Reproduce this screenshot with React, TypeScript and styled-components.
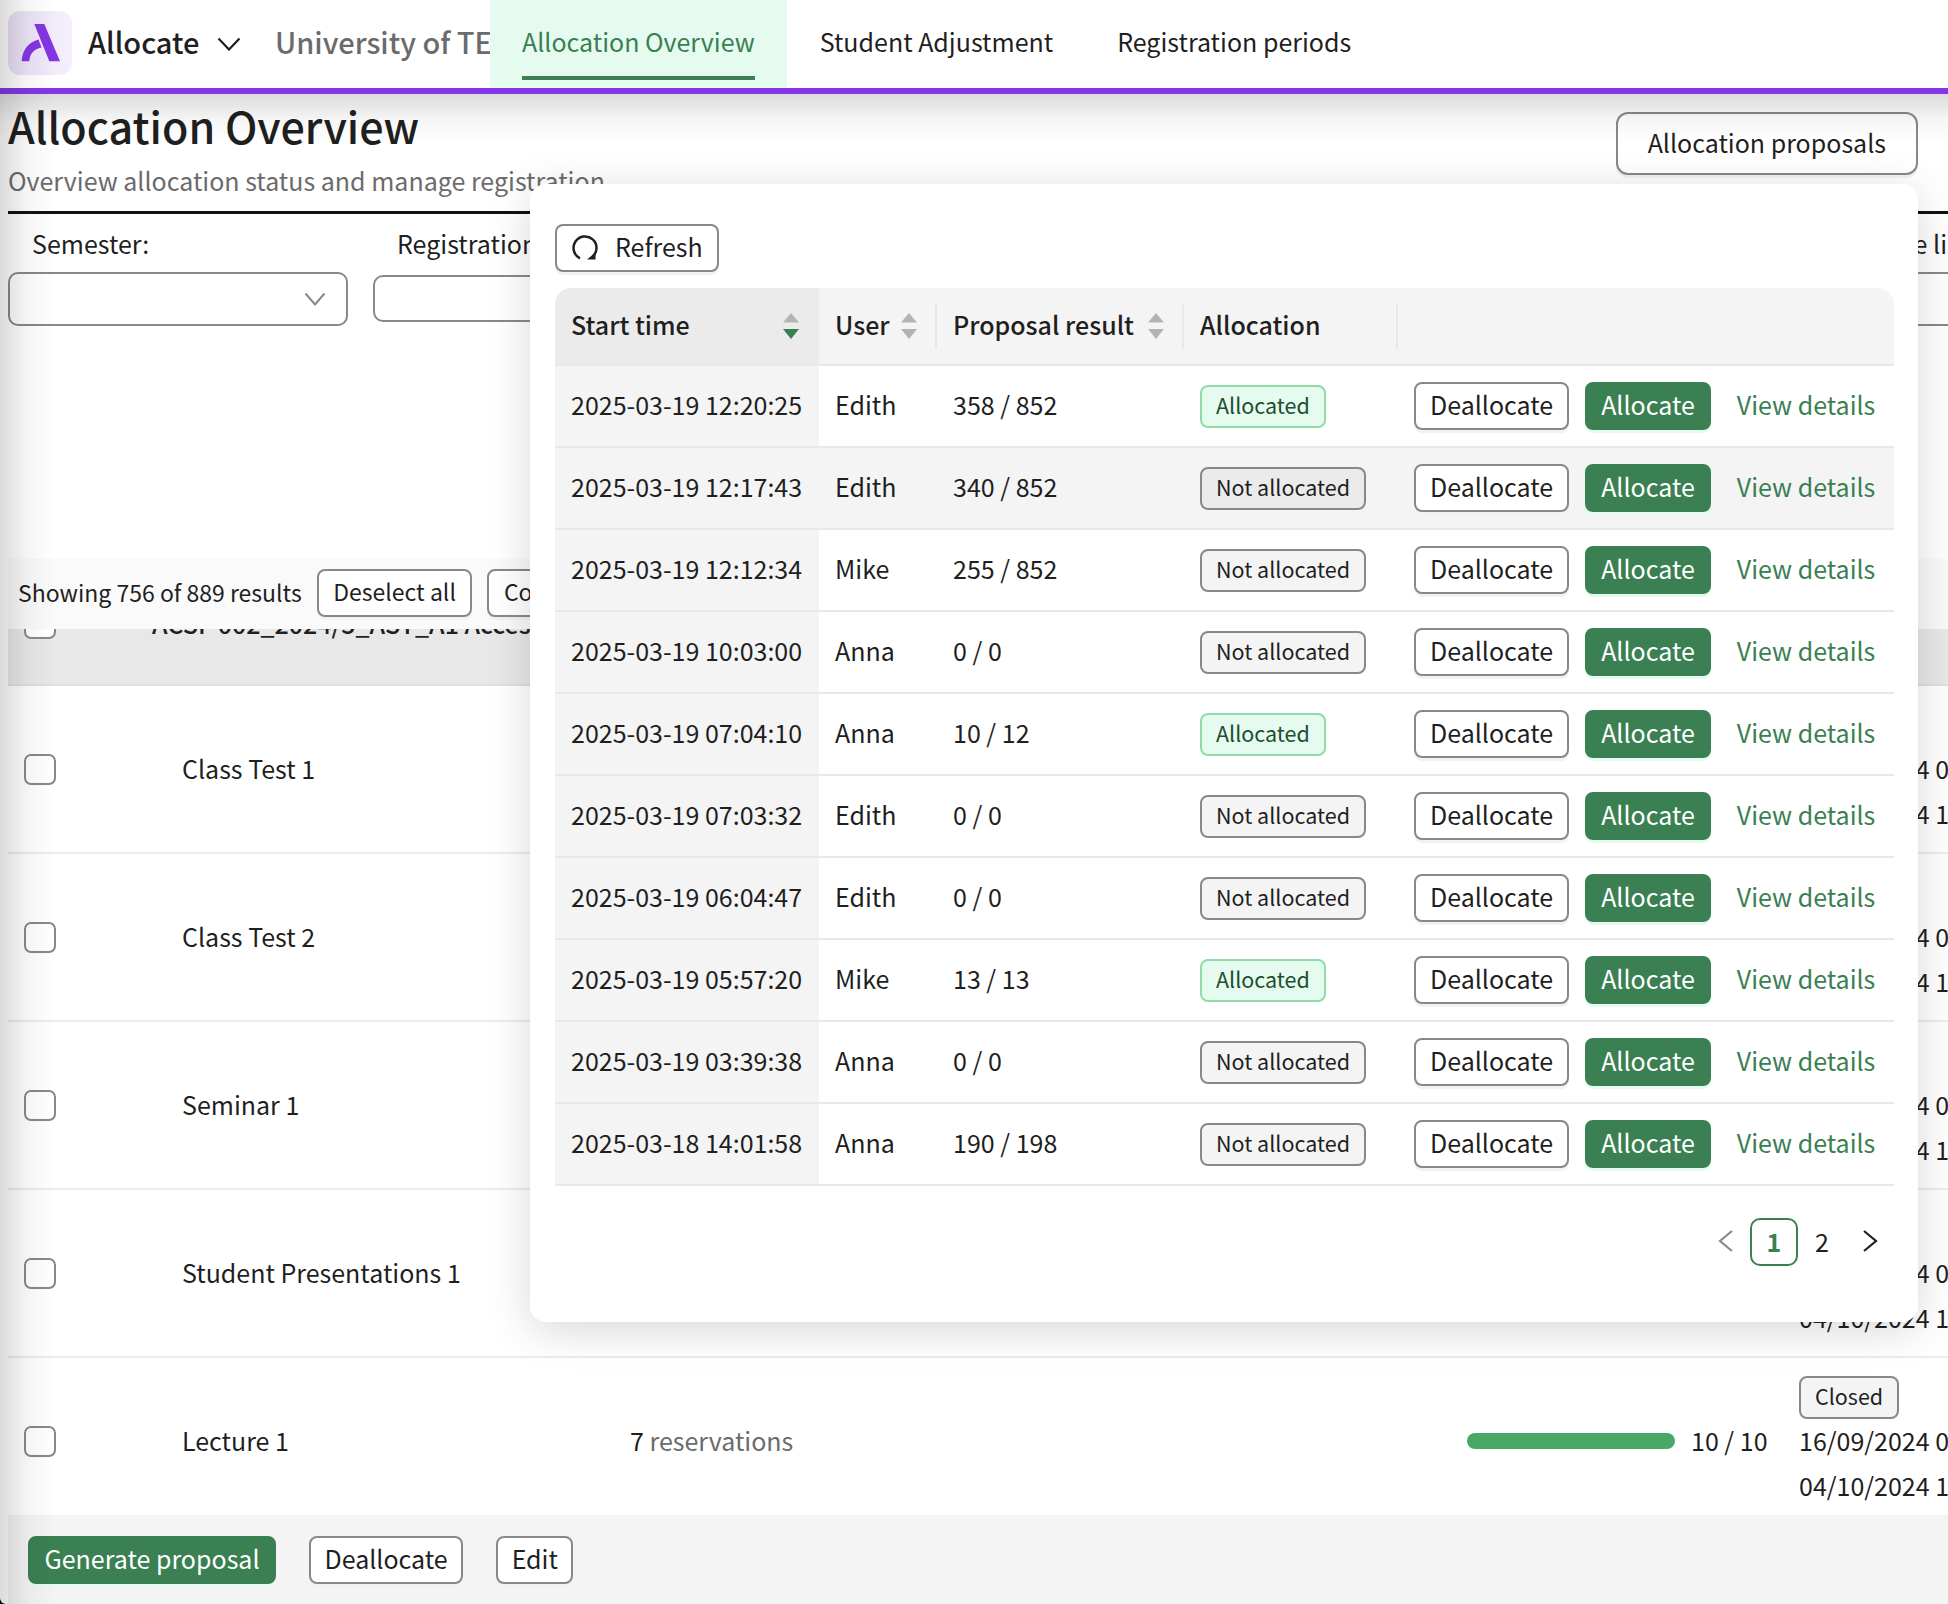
import React from "react";
import styled, { createGlobalStyle } from "styled-components";

const GREEN = "#3a8052";
const INK = "#1f1f1f";

const GlobalStyle = createGlobalStyle`
  * {
    box-sizing: border-box;
  }
  html, body {
    margin: 0;
    padding: 0;
    background: #000;
  }
  body {
    font-family: "Noto Sans CJK SC", "Noto Sans", sans-serif;
    color: ${INK};
  }
`;

const Page = styled.div`
  position: relative;
  width: 1948px;
  height: 1604px;
  overflow: hidden;
  background: #fff;
  border-bottom-left-radius: 6px;
  display: flex;
  flex-direction: column;

  &::after {
    content: "";
    position: absolute;
    inset: 0 auto 0 0;
    width: 56px;
    z-index: 1;
    pointer-events: none;
    background: linear-gradient(90deg, rgba(0, 0, 0, 0.14), rgba(0, 0, 0, 0.04) 50%, transparent);
  }
`;

const TopBar = styled.header`
  flex: none;
  height: 94px;
  display: flex;
  align-items: stretch;
  background: #fff;
  border-bottom: 6px solid #8435e5;
`;

const LogoBox = styled.div`
  flex: none;
  width: 64px;
  height: 64px;
  margin: 11px 0 0 8px;
  border-radius: 12px;
  background: linear-gradient(90deg, #e8e0f3, #f6effd);
`;

const AppName = styled.div`
  margin-left: 16px;
  width: 109px;
  padding-bottom: 6px;
  display: flex;
  align-items: center;
  font-size: 29px;
  font-weight: 500;
`;

const AppChevron = styled.svg`
  align-self: center;
  margin-left: 20px;
  width: 24px;
  height: 14px;
  flex: none;
`;

const OrgName = styled.div`
  width: 215px;
  margin-left: 34px;
  padding-bottom: 6px;
  overflow: hidden;
  white-space: nowrap;
  display: flex;
  align-items: center;
  font-size: 29px;
  font-weight: 500;
  color: #6b6b6b;
`;

const Tab = styled.a<{ $active?: boolean }>`
  display: block;
  padding: 0 32px;
  margin-right: ${(p) => (p.$active ? "1px" : "0")};
  background: ${(p) => (p.$active ? "#e6fbf0" : "transparent")};
  color: ${(p) => (p.$active ? GREEN : INK)};
  font-size: 25px;
  white-space: nowrap;
`;

const TabLabel = styled.span<{ $active?: boolean }>`
  display: block;
  height: 80px;
  line-height: 82px;
  border-bottom: 4px solid ${(p) => (p.$active ? GREEN : "transparent")};
`;

const Main = styled.main`
  position: relative;
  flex: 1;
  min-height: 0;
  display: flex;
  flex-direction: column;

  &::after {
    content: "";
    position: absolute;
    inset: 0 0 auto 0;
    height: 48px;
    z-index: 1;
    pointer-events: none;
    background: linear-gradient(180deg, rgba(0, 0, 0, 0.14), rgba(0, 0, 0, 0.035) 55%, transparent);
  }
`;

const Head = styled.div`
  flex: none;
  height: 120px;
  margin-left: 8px;
  display: flex;
  justify-content: space-between;
  align-items: flex-start;
  border-bottom: 3px solid #111;
`;

const Title = styled.h1`
  margin: 1px 0 0;
  font-size: 43px;
  line-height: 60px;
  font-weight: 500;
`;

const Subtitle = styled.p`
  margin: 2px 0 0;
  font-size: 25px;
  line-height: 46px;
  color: #6b6b6b;
  white-space: nowrap;
`;

const Button = styled.button<{ $primary?: boolean }>`
  flex: none;
  height: 48px;
  padding: 0 14.5px 3px;
  font: inherit;
  font-size: 25px;
  line-height: 1;
  white-space: nowrap;
  color: ${(p) => (p.$primary ? "#fff" : INK)};
  background: ${(p) => (p.$primary ? GREEN : "#fff")};
  border: 2px solid ${(p) => (p.$primary ? GREEN : "#888")};
  border-radius: 8px;
  box-shadow: 0 3px 0 ${(p) => (p.$primary ? "#e6fbf0" : "#f2f2f2")};
`;

const ProposalsButton = styled(Button)`
  height: 63px;
  margin: 18px 30px 0 0;
  padding: 0 30px 3px;
  border-radius: 12px;
`;

const Filters = styled.div`
  flex: none;
  height: 115px;
  margin-left: 8px;
  padding-top: 6px;
  display: flex;
  white-space: nowrap;
`;

const Filter = styled.div<{ $width: number; $offset: number }>`
  flex: none;
  width: ${(p) => p.$width}px;
  margin-left: ${(p) => p.$offset}px;
`;

const FilterLabel = styled.div`
  height: 52px;
  padding-left: 24px;
  font-size: 25px;
  line-height: 46px;
`;

const Select = styled.div<{ $tall?: boolean }>`
  height: ${(p) => (p.$tall ? 54 : 47)}px;
  margin-top: ${(p) => (p.$tall ? 0 : 3)}px;
  padding-right: 20px;
  display: flex;
  align-items: center;
  justify-content: flex-end;
  border: 2px solid #888;
  border-radius: 10px;
`;

const SelectChevron = styled.svg`
  width: 22px;
  height: 14px;
`;

const Selection = styled.div`
  flex: none;
  margin: 230px 0 0 8px;
  height: 70px;
  padding: 0 0 2px 10px;
  display: flex;
  align-items: center;
  gap: 15px;
  background: #fafafa;
  font-size: 23px;
  white-space: nowrap;
  position: relative;
  z-index: 0;

  ${Button} {
    font-size: 23px;
  }
`;

const RaisedText = styled.span`
  display: block;
  padding-bottom: 3px;
`;

const Rows = styled.div`
  flex: 1;
  min-height: 0;
  margin-left: 8px;
  overflow: hidden;
`;

const GroupRow = styled.div`
  height: 57px;
  overflow: hidden;
  background: #e8e8e8;
  border-bottom: 2px solid #e0e0e0;
`;

const GroupInner = styled.div`
  margin-top: -21px;
  padding-left: 16px;
  display: flex;
  align-items: center;
  gap: 96px;
  font-size: 25px;
  line-height: 31px;
  font-weight: 500;
  white-space: nowrap;
`;

const CheckBox = styled.span`
  display: block;
  flex: none;
  width: 32px;
  height: 31px;
  background: #fff;
  border: 2px solid #888;
  border-radius: 7px;
`;

const Row = styled.div`
  height: 168px;
  padding-left: 16px;
  display: grid;
  grid-template-columns: 158px 448px 837px 332px 1fr;
  align-items: center;
  border-bottom: 2px solid #ececec;
  font-size: 25px;
  white-space: nowrap;
`;

const Muted = styled.span`
  color: #6b6b6b;
`;

const Progress = styled.div`
  display: flex;
  align-items: center;
  gap: 16px;
`;

const Track = styled.div`
  width: 208px;
  height: 16px;
  border-radius: 8px;
  background: #4aa866;
`;

const Dates = styled.div`
  line-height: 45px;
`;

const Badge = styled.span<{ $tone: "green" | "grey" | "hover" }>`
  display: inline-block;
  height: 43px;
  padding: 0 14px;
  font-size: 21.500px;
  line-height: 36px;
  white-space: nowrap;
  border-radius: 8px;
  border: 2px solid ${(p) => (p.$tone === "green" ? "#8fdca6" : "#888")};
  color: ${(p) => (p.$tone === "green" ? "#1e4d31" : INK)};
  background: ${(p) =>
    p.$tone === "green" ? "#e6fbf0" : p.$tone === "hover" ? "#ebebeb" : "#f4f4f4"};
`;

const DateBadge = styled(Badge)`
  display: block;
  width: 100px;
  margin: 2px 0 -1px;
`;

const BottomBar = styled.div`
  flex: none;
  height: 89px;
  margin-left: 8px;
  padding: 21px 0 0 20px;
  display: flex;
  align-items: flex-start;
  gap: 33px;
  background: #f4f4f4;
`;

const BarButton = styled(Button)`
  padding: 0 13.500px 3px;
`;

const Modal = styled.section`
  position: absolute;
  left: 530px;
  top: 184px;
  z-index: 2;
  width: 1388px;
  height: 1138px;
  padding: 40px 24px 0 25px;
  background: #fff;
  border-radius: 16px;
  box-shadow: 0 8px 44px rgba(0, 0, 0, 0.16);
`;

const RefreshButton = styled(Button)`
  display: flex;
  align-items: center;
  gap: 17px;
  padding: 0 14px 0 15px;
  margin-bottom: 16px;
`;

const ProposalTable = styled.table`
  width: 1339px;
  border-collapse: collapse;
  table-layout: fixed;
  font-size: 25px;
`;

const HeadCell = styled.th<{ $sorted?: boolean; $width?: number }>`
  position: relative;
  width: ${(p) => (p.$width ? `${p.$width}px` : "auto")};
  height: 77px;
  padding: 0 20px 0 16px;
  text-align: left;
  font-weight: 500;
  background: ${(p) => (p.$sorted ? "#ebebeb" : "#f4f4f4")};
  border-bottom: 2px solid #e8e8e8;

  &:first-child {
    border-top-left-radius: 16px;
  }
  &:last-child {
    border-top-right-radius: 16px;
  }
  &:not(:first-child):not(:last-child)::after {
    content: "";
    position: absolute;
    right: 0;
    top: 15px;
    bottom: 15px;
    width: 2px;
    background: #e8e8e8;
  }
`;

const HeadInner = styled.div`
  display: flex;
  align-items: center;
  justify-content: space-between;
  white-space: nowrap;
`;

const HeadText = styled.span`
  display: block;
  padding-bottom: 5px;
`;

const Sorter = styled.svg`
  flex: none;
  width: 16px;
  height: 26px;
`;

const BodyRow = styled.tr<{ $hover?: boolean }>`
  height: 82px;
  background: ${(p) => (p.$hover ? "#f4f4f4" : "#fff")};
  border-bottom: 2px solid #e8e8e8;
`;

const Cell = styled.td<{ $sorted?: boolean }>`
  padding: 0 16px;
  white-space: nowrap;
  background: ${(p) => (p.$sorted ? "#f4f4f4" : "transparent")};
`;

const CellText = styled.span`
  position: relative;
  top: -2px;
`;

const Actions = styled.div`
  display: flex;
  align-items: center;
  gap: 16px;

  ${Button} {
    padding: 0 14px 3px;
  }
`;

const DetailLink = styled.a`
  margin-left: 10px;
  color: ${GREEN};
  position: relative;
  top: -2px;
`;

const Pager = styled.nav`
  margin-top: 32px;
  display: flex;
  justify-content: flex-end;
  align-items: center;
  font-size: 25px;
`;

const PageItem = styled.span<{ $active?: boolean }>`
  width: 48px;
  height: 48px;
  padding-bottom: 3px;
  display: flex;
  align-items: center;
  justify-content: center;
  border-radius: 10px;
  border: 2px solid ${(p) => (p.$active ? GREEN : "transparent")};
  color: ${(p) => (p.$active ? GREEN : INK)};
  font-weight: ${(p) => (p.$active ? 700 : 400)};
`;

type Proposal = { time: string; user: string; result: string; allocated: boolean };

const proposals: Proposal[] = [
  { time: "2025-03-19 12:20:25", user: "Edith", result: "358 / 852", allocated: true },
  { time: "2025-03-19 12:17:43", user: "Edith", result: "340 / 852", allocated: false },
  { time: "2025-03-19 12:12:34", user: "Mike", result: "255 / 852", allocated: false },
  { time: "2025-03-19 10:03:00", user: "Anna", result: "0 / 0", allocated: false },
  { time: "2025-03-19 07:04:10", user: "Anna", result: "10 / 12", allocated: true },
  { time: "2025-03-19 07:03:32", user: "Edith", result: "0 / 0", allocated: false },
  { time: "2025-03-19 06:04:47", user: "Edith", result: "0 / 0", allocated: false },
  { time: "2025-03-19 05:57:20", user: "Mike", result: "13 / 13", allocated: true },
  { time: "2025-03-19 03:39:38", user: "Anna", result: "0 / 0", allocated: false },
  { time: "2025-03-18 14:01:58", user: "Anna", result: "190 / 198", allocated: false },
];

const sessions = ["Class Test 1", "Class Test 2", "Seminar 1", "Student Presentations 1", "Lecture 1"];

const Chevron: React.FC<{ dir: "left" | "right"; color: string }> = ({ dir, color }) => (
  <svg width="16" height="22" viewBox="0 0 16 22" fill="none">
    <path
      d={dir === "left" ? "M14 1 2 11l12 10" : "M2 1l12 10L2 21"}
      stroke={color}
      strokeWidth="2.200"
    />
  </svg>
);

const SortIcon: React.FC<{ active?: boolean }> = ({ active }) => (
  <Sorter viewBox="0 0 16 26">
    <path d="M8 0l8 9.500H0z" fill="#b3b3b3" />
    <path d="M0 16h16l-8 10z" fill={active ? GREEN : "#b3b3b3"} />
  </Sorter>
);

const App: React.FC = () => {
  return (
    <Page>
      <GlobalStyle />
      <TopBar>
        <LogoBox>
          <svg width="64" height="64" viewBox="0 0 64 64">
            <path d="M26.300 13h10L52 50.300H41.300z" fill="#8435e5" />
            <path
              d="M13.700 50.300C14 39 21 31 30.500 28.500l3 8C26 38 21.500 43 21.300 50.300z"
              fill="#8435e5"
            />
          </svg>
        </LogoBox>
        <AppName>Allocate</AppName>
        <AppChevron viewBox="0 0 24 14" fill="none">
          <path d="M1.500 1.500 12 12.500 22.500 1.500" stroke={INK} strokeWidth="2.200" />
        </AppChevron>
        <OrgName>University of TEST</OrgName>
        <Tab $active>
          <TabLabel $active>Allocation Overview</TabLabel>
        </Tab>
        <Tab>
          <TabLabel>Student Adjustment</TabLabel>
        </Tab>
        <Tab>
          <TabLabel>Registration periods</TabLabel>
        </Tab>
      </TopBar>

      <Main>
        <Head>
          <div>
            <Title>Allocation Overview</Title>
            <Subtitle>Overview allocation status and manage registration</Subtitle>
          </div>
          <ProposalsButton>Allocation proposals</ProposalsButton>
        </Head>

        <Filters>
          <Filter $width={340} $offset={0}>
            <FilterLabel>Semester:</FilterLabel>
            <Select $tall>
              <SelectChevron viewBox="0 0 22 14" fill="none">
                <path d="M1.500 1.500 11 12.500 20.500 1.500" stroke="#888" strokeWidth="2" />
              </SelectChevron>
            </Select>
          </Filter>
          <Filter $width={340} $offset={25}>
            <FilterLabel>Registration period:</FilterLabel>
            <Select />
          </Filter>
          <Filter $width={400} $offset={1109}>
            <FilterLabel>Course list:</FilterLabel>
            <Select $tall />
          </Filter>
        </Filters>

        <Selection>
          <RaisedText>Showing 756 of 889 results</RaisedText>
          <Button>Deselect all</Button>
          <Button>Collapse all</Button>
        </Selection>

        <Rows>
          <GroupRow>
            <GroupInner>
              <CheckBox />
              ACSF 002_2024/5_AST_A1 Access
            </GroupInner>
          </GroupRow>
          {sessions.map((name) => (
            <Row key={name}>
              <CheckBox />
              <RaisedText>{name}</RaisedText>
              <RaisedText>
                7 <Muted>reservations</Muted>
              </RaisedText>
              <Progress>
                <Track />
                <RaisedText>10 / 10</RaisedText>
              </Progress>
              <Dates>
                <DateBadge $tone="grey">Closed</DateBadge>
                <div>16/09/2024 09:00</div>
                <div>04/10/2024 17:00</div>
              </Dates>
            </Row>
          ))}
        </Rows>

        <BottomBar>
          <Button $primary>Generate proposal</Button>
          <BarButton>Deallocate</BarButton>
          <BarButton>Edit</BarButton>
        </BottomBar>
      </Main>

      <Modal>
        <RefreshButton>
          <svg width="26" height="26" viewBox="0 0 26 26" fill="none">
            <path d="M8 23.300A11.500 11.500 0 1 1 20.500 21.700" stroke={INK} strokeWidth="2.500" />
            <path d="M15 24.500 23.500 17.500v7z" fill={INK} />
          </svg>
          <RaisedText>Refresh</RaisedText>
        </RefreshButton>

        <ProposalTable>
          <thead>
            <tr>
              <HeadCell $sorted $width={264}>
                <HeadInner>
                  <HeadText>Start time</HeadText>
                  <SortIcon active />
                </HeadInner>
              </HeadCell>
              <HeadCell $width={118}>
                <HeadInner>
                  <HeadText>User</HeadText>
                  <SortIcon />
                </HeadInner>
              </HeadCell>
              <HeadCell $width={247}>
                <HeadInner>
                  <HeadText>Proposal result</HeadText>
                  <SortIcon />
                </HeadInner>
              </HeadCell>
              <HeadCell $width={214}>
                <HeadInner>
                  <HeadText>Allocation</HeadText>
                </HeadInner>
              </HeadCell>
              <HeadCell />
            </tr>
          </thead>
          <tbody>
            {proposals.map((row, i) => (
              <BodyRow key={row.time} $hover={i === 1}>
                <Cell $sorted>
                  <CellText>{row.time}</CellText>
                </Cell>
                <Cell>
                  <CellText>{row.user}</CellText>
                </Cell>
                <Cell>
                  <CellText>{row.result}</CellText>
                </Cell>
                <Cell>
                  {row.allocated ? (
                    <Badge $tone="green">Allocated</Badge>
                  ) : (
                    <Badge $tone={i === 1 ? "hover" : "grey"}>Not allocated</Badge>
                  )}
                </Cell>
                <Cell>
                  <Actions>
                    <Button>Deallocate</Button>
                    <Button $primary>Allocate</Button>
                    <DetailLink>View details</DetailLink>
                  </Actions>
                </Cell>
              </BodyRow>
            ))}
          </tbody>
        </ProposalTable>

        <Pager>
          <PageItem>
            <Chevron dir="left" color="#8a8a8a" />
          </PageItem>
          <PageItem $active>1</PageItem>
          <PageItem>2</PageItem>
          <PageItem>
            <Chevron dir="right" color={INK} />
          </PageItem>
        </Pager>
      </Modal>
    </Page>
  );
};

export default App;
